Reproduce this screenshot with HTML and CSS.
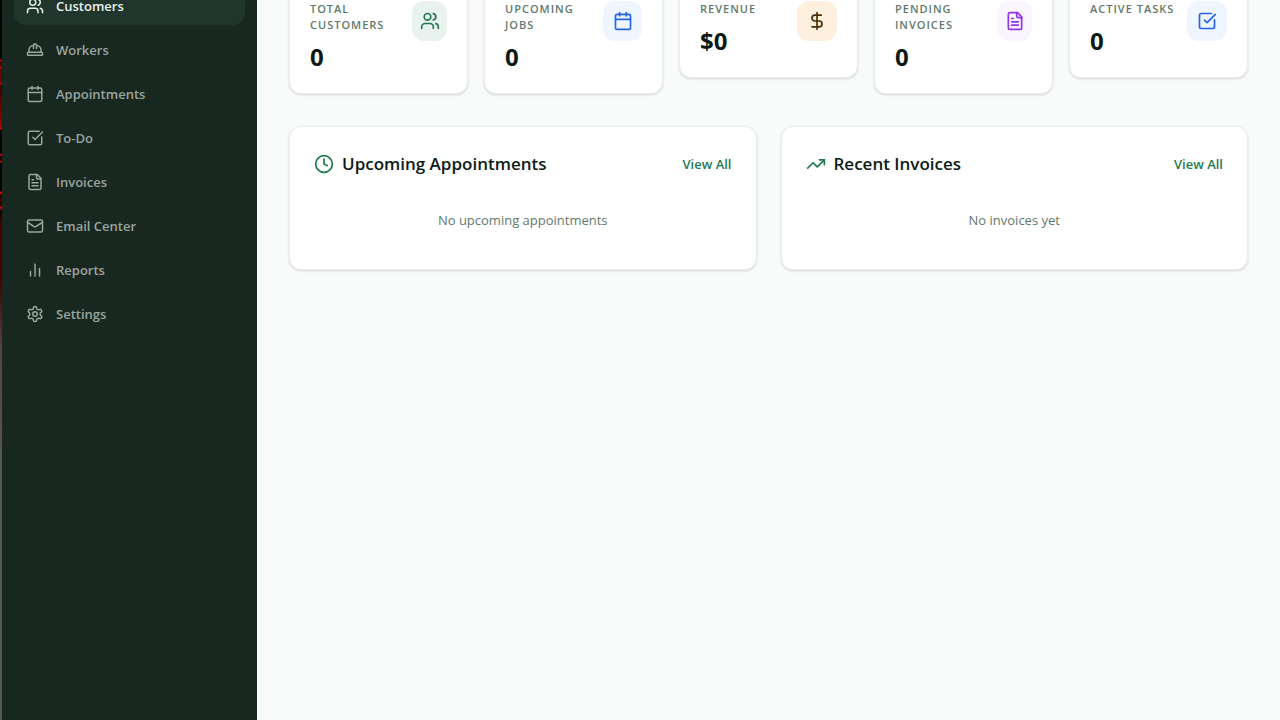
FILE: index.html
```html
<!DOCTYPE html>
<html lang="en">
<head>
    <meta charset="UTF-8">
    <meta name="viewport" content="width=device-width, initial-scale=1.0">
    <title>Dashboard</title>
    <link rel="stylesheet" href="styles.css">
</head>
<body>
    <svg class="sprite" aria-hidden="true">
        <symbol id="icon-users" viewBox="0 0 24 24">
            <path d="M16 21v-2a4 4 0 0 0-4-4H6a4 4 0 0 0-4 4v2"/>
            <circle cx="9" cy="7" r="4"/>
            <path d="M22 21v-2a4 4 0 0 0-3-3.87"/>
            <path d="M16 3.13a4 4 0 0 1 0 7.75"/>
        </symbol>
        <symbol id="icon-hard-hat" viewBox="0 0 24 24">
            <path d="M2 18a1 1 0 0 0 1 1h18a1 1 0 0 0 1-1v-2a1 1 0 0 0-1-1H3a1 1 0 0 0-1 1v2z"/>
            <path d="M10 10V5a1 1 0 0 1 1-1h2a1 1 0 0 1 1 1v5"/>
            <path d="M4 15v-3a6 6 0 0 1 6-6"/>
            <path d="M14 6a6 6 0 0 1 6 6v3"/>
        </symbol>
        <symbol id="icon-calendar" viewBox="0 0 24 24">
            <path d="M8 2v4"/>
            <path d="M16 2v4"/>
            <rect width="18" height="18" x="3" y="4" rx="2"/>
            <path d="M3 10h18"/>
        </symbol>
        <symbol id="icon-check" viewBox="0 0 24 24">
            <path d="M21 10.5V19a2 2 0 0 1-2 2H5a2 2 0 0 1-2-2V5a2 2 0 0 1 2-2h12.5"/>
            <path d="m9 11 3 3L22 4"/>
        </symbol>
        <symbol id="icon-file" viewBox="0 0 24 24">
            <path d="M15 2H6a2 2 0 0 0-2 2v16a2 2 0 0 0 2 2h12a2 2 0 0 0 2-2V7Z"/>
            <path d="M14 2v4a2 2 0 0 0 2 2h4"/>
            <path d="M10 9H8"/>
            <path d="M16 13H8"/>
            <path d="M16 17H8"/>
        </symbol>
        <symbol id="icon-mail" viewBox="0 0 24 24">
            <rect width="20" height="16" x="2" y="4" rx="2"/>
            <path d="m22 7-8.97 5.7a1.94 1.94 0 0 1-2.06 0L2 7"/>
        </symbol>
        <symbol id="icon-chart" viewBox="0 0 24 24">
            <path d="M18 20V10"/>
            <path d="M12 20V4"/>
            <path d="M6 20v-6"/>
        </symbol>
        <symbol id="icon-settings" viewBox="0 0 24 24">
            <path d="M12.22 2h-.44a2 2 0 0 0-2 2v.18a2 2 0 0 1-1 1.73l-.43.25a2 2 0 0 1-2 0l-.15-.08a2 2 0 0 0-2.73.73l-.22.38a2 2 0 0 0 .73 2.73l.15.1a2 2 0 0 1 1 1.72v.51a2 2 0 0 1-1 1.74l-.15.09a2 2 0 0 0-.73 2.73l.22.38a2 2 0 0 0 2.73.73l.15-.08a2 2 0 0 1 2 0l.43.25a2 2 0 0 1 1 1.73V20a2 2 0 0 0 2 2h.44a2 2 0 0 0 2-2v-.18a2 2 0 0 1 1-1.73l.43-.25a2 2 0 0 1 2 0l.15.08a2 2 0 0 0 2.73-.73l.22-.39a2 2 0 0 0-.73-2.73l-.15-.08a2 2 0 0 1-1-1.74v-.5a2 2 0 0 1 1-1.74l.15-.09a2 2 0 0 0 .73-2.73l-.22-.38a2 2 0 0 0-2.73-.73l-.15.08a2 2 0 0 1-2 0l-.43-.25a2 2 0 0 1-1-1.73V4a2 2 0 0 0-2-2z"/>
            <circle cx="12" cy="12" r="3"/>
        </symbol>
        <symbol id="icon-dollar" viewBox="0 0 24 24">
            <path d="M12 2v20"/>
            <path d="M17 5H9.5a3.5 3.5 0 0 0 0 7h5a3.5 3.5 0 0 1 0 7H6"/>
        </symbol>
        <symbol id="icon-clock" viewBox="0 0 24 24">
            <circle cx="12" cy="12" r="10"/>
            <path d="M12 6v6l4 2"/>
        </symbol>
        <symbol id="icon-trending" viewBox="0 0 24 24">
            <path d="m22 7-8.5 8.5-5-5L2 17"/>
            <path d="M16 7h6v6"/>
        </symbol>
    </svg>

    <div class="app">
        <aside class="sidebar">
            <nav class="nav">
                <a href="#" class="nav-link active"><svg class="icon"><use href="#icon-users"/></svg>Customers</a>
                <a href="#" class="nav-link"><svg class="icon"><use href="#icon-hard-hat"/></svg>Workers</a>
                <a href="#" class="nav-link"><svg class="icon"><use href="#icon-calendar"/></svg>Appointments</a>
                <a href="#" class="nav-link"><svg class="icon"><use href="#icon-check"/></svg>To-Do</a>
                <a href="#" class="nav-link"><svg class="icon"><use href="#icon-file"/></svg>Invoices</a>
                <a href="#" class="nav-link"><svg class="icon"><use href="#icon-mail"/></svg>Email Center</a>
                <a href="#" class="nav-link"><svg class="icon"><use href="#icon-chart"/></svg>Reports</a>
                <a href="#" class="nav-link"><svg class="icon"><use href="#icon-settings"/></svg>Settings</a>
            </nav>
        </aside>

        <main class="main">
            <section class="stats">
                <div class="card stat">
                    <div>
                        <p class="stat-label">Total Customers</p>
                        <p class="stat-value">0</p>
                    </div>
                    <div class="stat-icon green"><svg class="icon"><use href="#icon-users"/></svg></div>
                </div>
                <div class="card stat">
                    <div>
                        <p class="stat-label">Upcoming Jobs</p>
                        <p class="stat-value">0</p>
                    </div>
                    <div class="stat-icon blue"><svg class="icon"><use href="#icon-calendar"/></svg></div>
                </div>
                <div class="card stat">
                    <div>
                        <p class="stat-label">Revenue</p>
                        <p class="stat-value">$0</p>
                    </div>
                    <div class="stat-icon orange"><svg class="icon"><use href="#icon-dollar"/></svg></div>
                </div>
                <div class="card stat">
                    <div>
                        <p class="stat-label">Pending Invoices</p>
                        <p class="stat-value">0</p>
                    </div>
                    <div class="stat-icon purple"><svg class="icon"><use href="#icon-file"/></svg></div>
                </div>
                <div class="card stat">
                    <div>
                        <p class="stat-label">Active Tasks</p>
                        <p class="stat-value">0</p>
                    </div>
                    <div class="stat-icon blue"><svg class="icon"><use href="#icon-check"/></svg></div>
                </div>
            </section>

            <section class="panels">
                <div class="card panel">
                    <div class="panel-header">
                        <h2><svg class="icon"><use href="#icon-clock"/></svg>Upcoming Appointments</h2>
                        <a href="#" class="view-all">View All</a>
                    </div>
                    <p class="empty">No upcoming appointments</p>
                </div>
                <div class="card panel">
                    <div class="panel-header">
                        <h2><svg class="icon"><use href="#icon-trending"/></svg>Recent Invoices</h2>
                        <a href="#" class="view-all">View All</a>
                    </div>
                    <p class="empty">No invoices yet</p>
                </div>
            </section>
        </main>
    </div>
</body>
</html>
```
FILE: styles.css
```css
:root {
    --bg: #f9fbfa;
    --sidebar: #182720;
    --sidebar-active: #20362c;
    --text: #0b1a14;
    --muted: #61796d;
    --accent: #1f7a4f;
    --border: #e9efed;
}

* {
    margin: 0;
    padding: 0;
    box-sizing: border-box;
}

body {
    font-family: 'Open Sans', 'Noto Sans', sans-serif;
    font-size: 13px;
    line-height: 20px;
    background-color: var(--bg);
    color: var(--text);
}

a {
    text-decoration: none;
}

.sprite {
    display: none;
}

.icon {
    width: 20px;
    height: 20px;
    flex-shrink: 0;
    fill: none;
    stroke: currentColor;
    stroke-width: 2;
    stroke-linecap: round;
    stroke-linejoin: round;
}

.app {
    display: flex;
    height: 100vh;
    overflow: hidden;
}

/* Sidebar, scrolled part of the way down */
.sidebar {
    width: 257px;
    flex-shrink: 0;
    padding: 0 12px;
    background-color: var(--sidebar);
    border-left: 2px solid;
    border-image: linear-gradient(#000 60px, #e00 61px, #400 63px, #400 67px, #e00 68px, #500 70px, #600 83px, #e00 84px, #300 86px, #900 127px, #e00 129px, #000 131px, #000 154px, #e00 155px, #200 157px, #200 161px, #e00 162px, #000 164px, #000 191px, #e00 193px, #300 195px, #300 206px, #e00 208px, #100 211px, #400 225px, #400 280px, #544 350px, #555 450px) 1;
    overflow: hidden;
}

.nav {
    display: flex;
    flex-direction: column;
    gap: 4px;
    margin-top: -15px;
}

.nav-link {
    display: flex;
    align-items: center;
    gap: 12px;
    height: 40px;
    padding: 2px 12px 0;
    border-radius: 12px;
    color: #9aa59f;
    font-weight: 600;
}

.nav-link .icon {
    width: 18px;
    height: 18px;
}

.nav-link.active {
    background-color: var(--sidebar-active);
    color: #e9efec;
}

.main {
    flex: 1;
    min-width: 0;
    padding: 0 32px;
    overflow: hidden;
}

.card {
    background-color: #fff;
    border: 1px solid var(--border);
    border-radius: 12px;
    box-shadow: 0 1px 3px rgba(0, 0, 0, 0.1), 0 1px 2px rgba(0, 0, 0, 0.06);
}

/* Stat cards */
.stats {
    display: grid;
    grid-template-columns: repeat(5, 1fr);
    align-items: start;
    gap: 16px;
    margin-top: -20px;
    margin-bottom: 32px;
}

.stat {
    display: flex;
    justify-content: space-between;
    align-items: flex-start;
    padding: 20px;
}

.stat-label {
    font-size: 11px;
    line-height: 16px;
    font-weight: 600;
    letter-spacing: 1px;
    text-transform: uppercase;
    color: var(--muted);
}

.stat-value {
    margin-top: 8px;
    font-size: 24px;
    line-height: 32px;
    font-weight: 700;
}

.stat-icon {
    display: flex;
    align-items: center;
    justify-content: center;
    width: 40px;
    height: 40px;
    border-radius: 12px;
}

.stat-icon.green {
    background-color: #e9f2ee;
    color: #1f7a4f;
}

.stat-icon.blue {
    background-color: #eff6ff;
    color: #2563eb;
}

.stat-icon.orange {
    background-color: #fdf0df;
    color: #4a2c05;
}

.stat-icon.purple {
    background-color: #faf5ff;
    color: #9333ea;
}

/* Panels */
.panels {
    display: grid;
    grid-template-columns: repeat(2, 1fr);
    gap: 24px;
}

.panel {
    padding: 23px 24px;
}

.panel-header {
    display: flex;
    justify-content: space-between;
    align-items: center;
    margin-bottom: 16px;
}

.panel-header h2 {
    display: flex;
    align-items: center;
    gap: 8px;
    font-size: 17px;
    line-height: 28px;
    font-weight: 600;
}

.panel-header h2 .icon {
    color: var(--accent);
}

.view-all {
    color: var(--accent);
    font-weight: 600;
}

.empty {
    padding: 16px 0;
    text-align: center;
    color: var(--muted);
}
```
